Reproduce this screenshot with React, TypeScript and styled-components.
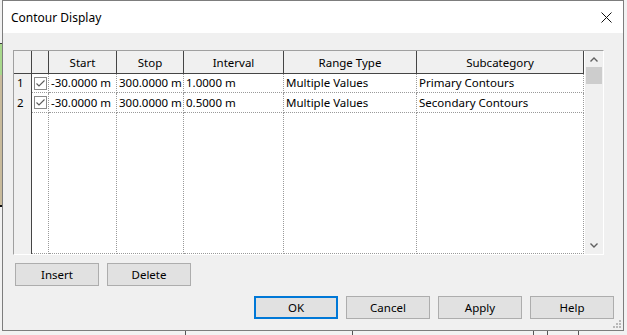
import React from 'react';
import styled, { createGlobalStyle } from 'styled-components';

const GlobalStyle = createGlobalStyle`
  html, body {
    margin: 0;
    padding: 0;
  }
  body {
    width: 627px;
    height: 335px;
    overflow: hidden;
    background: #f2f2f2;
    font-family: "Noto Sans", "Segoe UI", sans-serif;
    font-size: 11.5px;
    color: #000;
  }
`;

const Screen = styled.div`
  position: relative;
  width: 627px;
  height: 335px;
  padding-left: 2px;
  box-sizing: border-box;
`;

// what shows of the application behind the dialog
const Backdrop = styled.svg`
  position: absolute;
  left: 0;
  top: 0;
`;

const Dialog = styled.div`
  position: relative;
  width: 622px;
  height: 331px;
  box-sizing: border-box;
  border: 1px solid #7d7d7d;
  background: #f0f0f0;
  display: flex;
  flex-direction: column;
`;

const TitleBar = styled.div`
  flex: none;
  height: 32px;
  background: #fff;
  display: flex;
  align-items: center;
  justify-content: space-between;
  padding: 0 11px 0 8px;
  font-size: 12px;
`;

const Body = styled.div`
  flex: 1;
  display: flex;
  flex-direction: column;
  padding: 17px 9px 11px 10px;
`;

const Grid = styled.div`
  flex: none;
  height: 205px;
  margin-right: 10px;
  box-sizing: border-box;
  border: 1px solid;
  border-color: #a0a0a0 #ffffff #ffffff #a0a0a0;
  background: #fff;
  display: flex;
`;

const Table = styled.div`
  flex: 1;
  display: grid;
  grid-template-columns: 18px 17px 68px 67px 100px 133px 167px;
  grid-template-rows: 23px 19px 20px 1fr;
`;

const HeaderCell = styled.div`
  box-sizing: border-box;
  background: #f0f0f0;
  border-right: 1px solid #454545;
  border-bottom: 1px solid #454545;
  display: flex;
  align-items: center;
  justify-content: center;
  white-space: nowrap;
`;

const RowHead = styled.div`
  box-sizing: border-box;
  background: #f0f0f0;
  border-right: 1px solid #454545;
  padding: 0 0 2px 3px;
  display: flex;
  align-items: center;
`;

const Cell = styled.div<{ $center?: boolean }>`
  box-sizing: border-box;
  border-right: 1px dotted #9a9a9a;
  border-bottom: 1px dotted #9a9a9a;
  padding: ${p => (p.$center ? '0' : '0 0 1px 2px')};
  display: flex;
  align-items: center;
  justify-content: ${p => (p.$center ? 'center' : 'flex-start')};
  white-space: nowrap;
  overflow: hidden;
`;

const CheckBox = styled.span`
  width: 13px;
  height: 13px;
  box-sizing: border-box;
  border: 1px solid #8a8a8a;
  background: #fff;
  display: flex;
  align-items: center;
  justify-content: center;
`;

const ScrollBar = styled.div`
  width: 18px;
  background: #f0f0f0;
  display: flex;
  flex-direction: column;
`;

const ArrowZone = styled.div<{ $h: number }>`
  height: ${p => p.$h}px;
  display: flex;
  align-items: center;
  justify-content: center;
`;

const Thumb = styled.div`
  height: 17px;
  margin: 0 1px;
  background: #cdcdcd;
`;

const Track = styled.div`
  flex: 1;
`;

const ButtonRow = styled.div<{ $end?: boolean; $top: number }>`
  display: flex;
  gap: 8px;
  margin-top: ${p => p.$top}px;
  padding-left: ${p => (p.$end ? 0 : 2)}px;
  justify-content: ${p => (p.$end ? 'flex-end' : 'flex-start')};
`;

const Button = styled.button<{ $default?: boolean; $w: number }>`
  width: ${p => p.$w}px;
  height: 23px;
  box-sizing: border-box;
  margin: 0;
  padding: 0 0 1px;
  background: #e1e1e1;
  border: ${p => (p.$default ? '2px solid #0078d7' : '1px solid #adadad')};
  font-family: inherit;
  font-size: 11.5px;
  color: #000;
`;

const Grip = styled.svg`
  position: absolute;
  right: 2px;
  bottom: 2px;
`;

const columns = ['Start', 'Stop', 'Interval', 'Range Type', 'Subcategory'];

const rows = [
  ['-30.0000 m', '300.0000 m', '1.0000 m', 'Multiple Values', 'Primary Contours'],
  ['-30.0000 m', '300.0000 m', '0.5000 m', 'Multiple Values', 'Secondary Contours'],
];

const Check = () => (
  <svg width="9" height="7" viewBox="0 0 9 7">
    <polyline points="0.5,3.5 3,6 8.5,0.5" fill="none" stroke="#5a5a5a" strokeWidth="1.1" />
  </svg>
);

const Chevron = ({ up }: { up?: boolean }) => (
  <svg width="8" height="5" viewBox="0 0 8 5">
    <polyline
      points={up ? '0.5,4.5 4,1 7.5,4.5' : '0.5,0.5 4,4 7.5,0.5'}
      fill="none"
      stroke="#606060"
      strokeWidth="1.4"
    />
  </svg>
);

const App: React.FC = () => (
  <>
    <GlobalStyle />
    <Screen>
      <Backdrop width="627" height="335">
        <rect x="0" y="43" width="2" height="1" fill="#3a3a3a" />
        <rect x="0" y="44" width="2" height="31" fill="#a8d88c" />
        <rect x="0" y="75" width="2" height="130" fill="#c9bb9c" />
        <rect x="0" y="205" width="2" height="2" fill="#111" />
        <rect x="185" y="331" width="1" height="4" fill="#555" />
        <rect x="352" y="331" width="1" height="4" fill="#555" />
        <rect x="533" y="331" width="1" height="4" fill="#555" />
        <rect x="547" y="331" width="1" height="4" fill="#555" />
        <rect x="578" y="331" width="1" height="4" fill="#555" />
      </Backdrop>
      <Dialog>
        <TitleBar>
          <span>Contour Display</span>
          <svg width="11" height="11" viewBox="0 0 11 11">
            <path d="M0.5 0.5 L10.5 10.5 M10.5 0.5 L0.5 10.5" stroke="#111" strokeWidth="1" />
          </svg>
        </TitleBar>
        <Body>
          <Grid>
            <Table>
              <HeaderCell />
              <HeaderCell />
              {columns.map(c => (
                <HeaderCell key={c}>{c}</HeaderCell>
              ))}
              {rows.map((r, i) => (
                <React.Fragment key={i}>
                  <RowHead>{i + 1}</RowHead>
                  <Cell $center>
                    <CheckBox>
                      <Check />
                    </CheckBox>
                  </Cell>
                  {r.map((v, j) => (
                    <Cell key={j}>{v}</Cell>
                  ))}
                </React.Fragment>
              ))}
              <RowHead />
              {[0, 1, 2, 3, 4, 5].map(k => (
                <Cell key={k} />
              ))}
            </Table>
            <ScrollBar>
              <ArrowZone $h={16}>
                <Chevron up />
              </ArrowZone>
              <Thumb />
              <Track />
              <ArrowZone $h={17}>
                <Chevron />
              </ArrowZone>
            </ScrollBar>
          </Grid>
          <ButtonRow $top={8}>
            <Button $w={84}>Insert</Button>
            <Button $w={84}>Delete</Button>
          </ButtonRow>
          <ButtonRow $top={10} $end>
            <Button $w={84} $default>OK</Button>
            <Button $w={84}>Cancel</Button>
            <Button $w={84}>Apply</Button>
            <Button $w={84}>Help</Button>
          </ButtonRow>
        </Body>
        <Grip width="9" height="9" viewBox="0 0 9 9">
          <rect x="7" y="1" width="2" height="2" fill="#b8b8b8" />
          <rect x="4" y="4" width="2" height="2" fill="#b8b8b8" />
          <rect x="7" y="4" width="2" height="2" fill="#b8b8b8" />
          <rect x="1" y="7" width="2" height="2" fill="#b8b8b8" />
          <rect x="4" y="7" width="2" height="2" fill="#b8b8b8" />
          <rect x="7" y="7" width="2" height="2" fill="#b8b8b8" />
        </Grip>
      </Dialog>
    </Screen>
  </>
);

export default App;
